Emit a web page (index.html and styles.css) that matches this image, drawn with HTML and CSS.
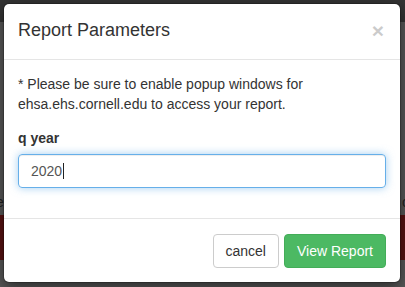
FILE: index.html
```html
<!DOCTYPE html>
<html>
<head>
<meta charset="utf-8">
<link rel="stylesheet" href="styles.css">
</head>
<body>
<div class="page">
  <div class="navbar"></div>
  <div class="content">
    <div class="spacer"></div>
    <div class="textrow"><span>e</span><span>c</span></div>
    <div class="redband"></div>
  </div>
</div>
<div class="modal">
  <div class="modal-header">
    <h4 class="modal-title">Report Parameters</h4>
    <span class="close">×</span>
  </div>
  <div class="modal-body">
    <p class="note">* Please be sure to enable popup windows for ehsa.ehs.cornell.edu to access your report.</p>
    <label class="label">q year</label>
    <div class="input"><span class="value">2020</span><span class="caret"></span></div>
  </div>
  <div class="modal-footer">
    <button class="btn btn-default">cancel</button>
    <button class="btn btn-success">View Report</button>
  </div>
</div>
</body>
</html>
```
FILE: styles.css
```css
* { box-sizing: border-box; }
html, body { margin: 0; padding: 0; }
body {
  width: 405px;
  height: 287px;
  overflow: hidden;
  font-family: "Liberation Sans", Arial, sans-serif;
  font-size: 14px;
  line-height: 20px;
  color: #333;
  background: #5a5a5a;
  position: relative;
}
.page { display: flex; flex-direction: column; height: 287px; }
.navbar { height: 22px; background: #343434; }
.content { flex: 1; display: flex; flex-direction: column; background: #5a5a5a; }
.spacer { height: 168px; }
.textrow { height: 25px; display: flex; justify-content: space-between; color: #222; font-size: 14px; line-height: 25px; margin: 0 -4px; }
.redband { height: 45px; background: #5a1212; }
.modal {
  position: absolute;
  top: 3px;
  left: 3px;
  width: 398px;
  background: #fff;
  border: 1px solid rgba(0,0,0,.2);
  border-radius: 6px;
  box-shadow: 0 5px 15px rgba(0,0,0,.5);
  background-clip: padding-box;
}
.modal-header {
  display: flex;
  justify-content: space-between;
  align-items: flex-start;
  padding: 13px 15px 16px 14px;
  border-bottom: 1px solid #e5e5e5;
}
.modal-title {
  margin: 0;
  font-size: 18px;
  font-weight: normal;
  line-height: 26px;
  color: #333;
}
.close {
  font-size: 21px;
  font-weight: bold;
  line-height: 1;
  color: #000;
  opacity: .2;
  margin-top: 3px;
  margin-right: 1px;
}
.modal-body {
  padding: 14px 14px 30px 14px;
  display: flex;
  flex-direction: column;
}
.note { margin: 0 0 14px 0; }
.label { font-weight: bold; margin-bottom: 6px; display: block; }
.input {
  height: 34px;
  padding: 6px 12px;
  border: 1px solid #66afe9;
  border-radius: 4px;
  box-shadow: inset 0 1px 1px rgba(0,0,0,.075), 0 0 8px rgba(102,175,233,.6);
  color: #555;
  display: flex;
  align-items: center;
}
.caret { display: inline-block; width: 1px; height: 16px; background: #222; margin-left: 1px; }
.modal-footer {
  padding: 15px 14px 14px 15px;
  border-top: 1px solid #e5e5e5;
  display: flex;
  justify-content: flex-end;
  gap: 5px;
}
.btn {
  font-family: "Liberation Sans", Arial, sans-serif;
  font-size: 14px;
  line-height: 20px;
  padding: 6px 12px;
  border-radius: 4px;
  border: 1px solid transparent;
  height: 34px;
  margin: 0;
}
.btn-default { background: #fff; border-color: #ccc; color: #333; }
.btn-success { background: #4cb963; border-color: #43ad58; color: #fff; }
```
